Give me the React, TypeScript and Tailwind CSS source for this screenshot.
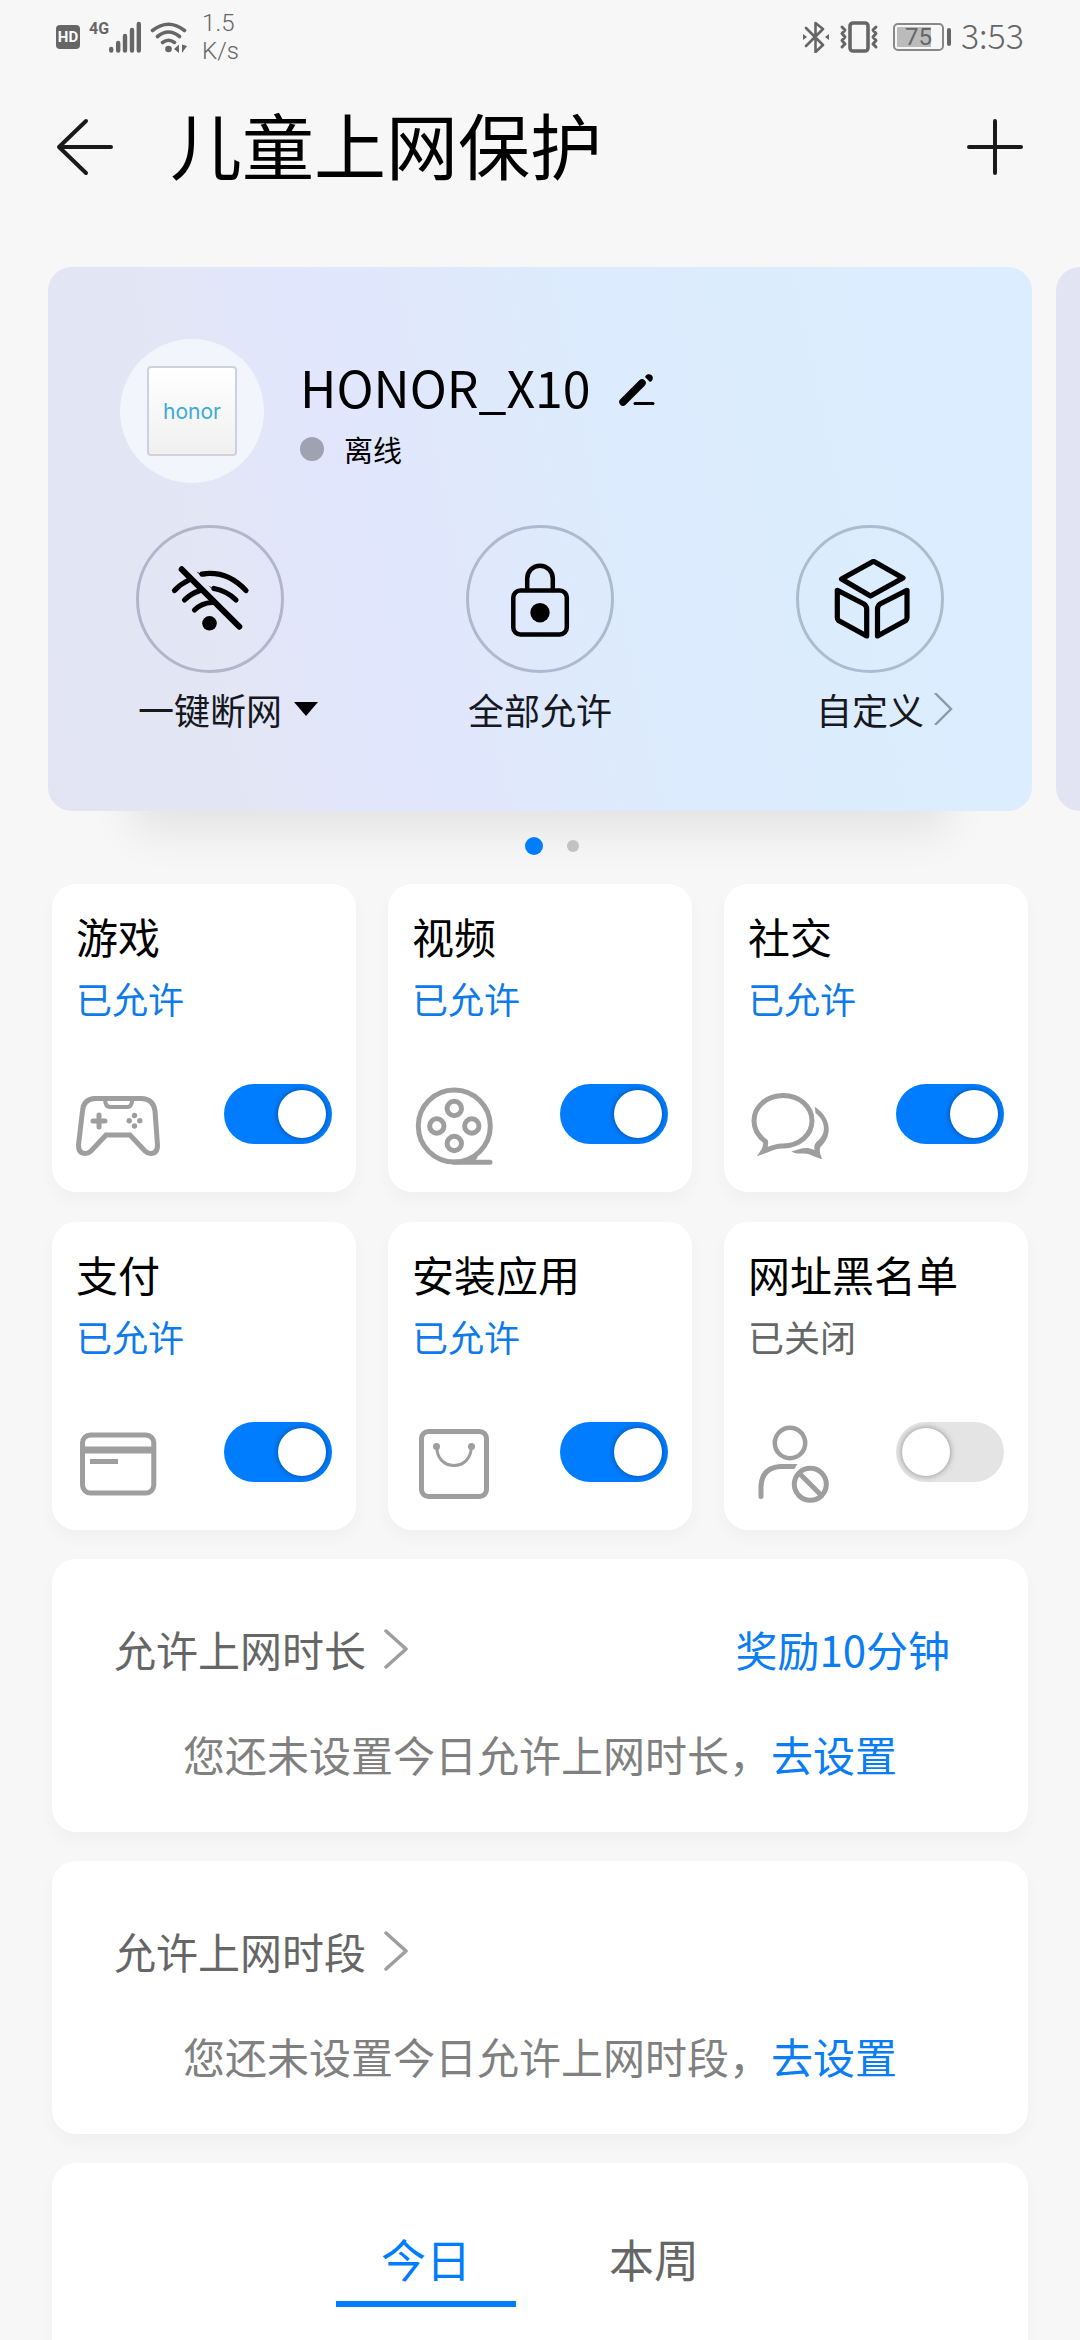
import { useState } from 'react';
import type { ReactNode } from 'react';
import { clsx } from 'clsx';

interface Rule {
  id: string;
  title: string;
  icon: ReactNode;
  enabled: boolean;
}

function SignalIcons() {
  return (
    <div className="flex items-center gap-[9px]">
      <span className="flex h-6 w-6 items-center justify-center rounded bg-[#666] font-[Roboto] text-[15px] leading-none font-bold text-white">
        HD
      </span>
      <div className="flex h-8 items-start">
        <span className="font-[Roboto] text-[16px] leading-[16px] font-bold text-[#666]">4G</span>
        <svg className="h-8 w-8" viewBox="0 0 32 32" stroke="#666" strokeWidth="4.4" strokeLinecap="round">
          <path d="M2.200 28v1.500M9.200 22v7.500M16 15v14.500M23 9v20.500M29.800 3v26.500" />
        </svg>
      </div>
      <svg className="h-8 w-[38px]" viewBox="0 0 38 32" fill="none" stroke="#666" strokeWidth="3.6" strokeLinecap="round">
        <path d="M2.500 9.500Q18.500-3 34.500 9.500M7.500 15.500Q18.500 6.500 29.500 15.500M12.500 21.500Q18.500 17 24.500 21.500" />
        <circle cx="18.500" cy="28" r="3.300" fill="#666" stroke="none" />
        <path d="M24 28l5-4.500V32zM37 25l-5 7v-8.500z" fill="#666" stroke="none" />
      </svg>
    </div>
  );
}

function StatusBar() {
  return (
    <div className="flex h-[74px] items-center justify-between px-14 font-[Roboto] text-[#666]">
      <div className="flex items-center gap-[14px]">
        <SignalIcons />
        <div className="text-[24px] leading-[28px] font-light">
          <div>1.5</div>
          <div>K/s</div>
        </div>
      </div>
      <div className="flex items-center gap-[10px]">
        <svg className="h-8 w-[26px]" viewBox="0 0 26 32" fill="none" stroke="#666" strokeWidth="2.600" strokeLinecap="round" strokeLinejoin="round">
          <path d="M3 7l17 17-7.500 7V2l7.500 6L3 25" />
          <path d="M0 13l4 3-4 3zM26 13l-4 3 4 3z" fill="#666" stroke="none" />
        </svg>
        <svg className="h-8 w-10" viewBox="0 0 40 32" fill="none" stroke="#666" strokeWidth="3" strokeLinecap="round" strokeLinejoin="round">
          <rect x="11" y="2" width="18" height="28" rx="3" strokeWidth="3.600" />
          <path d="M3 6l3 3-3 3.500 3 3.500-3 3.500 3 3.500-3 3M37 6l-3 3 3 3.500-3 3.500 3 3.500-3 3.500 3 3" />
        </svg>
        <div className="flex items-center gap-[3px] pl-1">
          <div className="flex h-7 w-[51px] items-center rounded-[5px] border-2 border-[#888] bg-[linear-gradient(90deg,#bbb_78%,transparent_78%)] bg-origin-content bg-clip-content p-[2px]">
            <span className="w-full text-center text-[24px] leading-none">75</span>
          </div>
          <div className="h-[18px] w-1 rounded-full bg-[#666]" />
        </div>
        <span className="pb-1 font-['Noto_Sans_CJK_SC',sans-serif] text-[34px] leading-none font-light">3:53</span>
      </div>
    </div>
  );
}

function Header() {
  return (
    <header className="flex h-[146px] items-center justify-between px-14">
      <div className="flex items-center gap-14">
        <button type="button" aria-label="返回">
          <svg className="h-[58px] w-[58px]" viewBox="0 0 58 58" fill="none" stroke="#1a1a1a" strokeWidth="4" strokeLinecap="round" strokeLinejoin="round">
            <path d="M55 29H3M30 3L3 29l27 26" />
          </svg>
        </button>
        <h1 className="pb-2 text-[72px] leading-[96px]">儿童上网保护</h1>
      </div>
      <button type="button" aria-label="添加">
        <svg className="h-[58px] w-[58px]" viewBox="0 0 58 58" stroke="#1a1a1a" strokeWidth="4" strokeLinecap="round">
          <path d="M3 29h52M29 3v52" />
        </svg>
      </button>
    </header>
  );
}

function QuickAction({ label, icon, mark }: { label: string; icon: ReactNode; mark?: ReactNode }) {
  return (
    <button type="button" className="flex w-[148px] flex-col items-center gap-3">
      <span className="flex h-[148px] w-[148px] items-center justify-center rounded-full border-3 border-[#1b2a4a]/25">
        <svg className="h-20 w-20" viewBox="0 0 80 80" fill="none" stroke="#000" strokeWidth="5.200" strokeLinecap="round" strokeLinejoin="round">
          {icon}
        </svg>
      </span>
      <span className="flex items-center text-[36px] leading-[48px] whitespace-nowrap text-[#16181d]">
        {label}
        {mark}
      </span>
    </button>
  );
}

function DeviceCard() {
  return (
    <section className="w-[calc(100%-48px)] shrink-0 rounded-3xl bg-[linear-gradient(78deg,#e2e4f3_0%,#e3e6f5_20%,#e1e6fd_32%,#e0e8fc_44%,#dcebfd_58%,#dbeeff_100%)] px-[72px] pt-[72px] pb-[78px] shadow-[0_106px_40px_-84px_rgba(0,0,0,0.08)]">
      <div className="flex items-center gap-9">
        <div className="flex h-36 w-36 items-center justify-center rounded-full bg-[#f3f5fc]">
          <div className="flex h-[90px] w-[90px] items-center justify-center rounded border-2 border-[#cfd0da] bg-linear-to-b from-white to-[#f0f0f0] font-[Inter] text-[21px] leading-none text-[#3cabd6]">
            honor
          </div>
        </div>
        <div className="flex flex-col gap-[15px]">
          <div className="flex items-center gap-7">
            <h2 className="text-[50px] leading-[60px]">HONOR_X10</h2>
            <button type="button" aria-label="重命名" className="pt-2">
              <svg className="h-8 w-9" viewBox="0 0 36 32" fill="none" stroke="#000" strokeLinecap="round">
                <path d="M4 28L23 9" strokeWidth="7.500" />
                <path d="M26 3l5 5a4 4 0 1 0-5-5z" fill="#000" stroke="none" />
                <path d="M16 29.500h18" strokeWidth="3" />
              </svg>
            </button>
          </div>
          <div className="flex items-center gap-5 text-[29px] leading-9">
            <span className="h-6 w-6 rounded-full bg-[#9fa2b1]" />
            离线
          </div>
        </div>
      </div>
      <div className="mt-[42px] flex justify-between px-4">
        <QuickAction
          label="一键断网"
          icon={
            <>
              <path d="M11.700 10.300L69.300 67.700" strokeWidth="6" />
              <path d="M4.500 31.500Q10.500 25 19 21M14.500 41Q21 34.500 29 32M24.500 51Q31.500 44 42 43.500" />
              <path d="M32 15Q57 11 76 31.500M44 29.500Q57 32 66 41" />
              <path d="M26.500 12.500L36 17.500H31.500zM38.500 26.500L47 32H44z" fill="#000" stroke="none" />
              <circle cx="39.500" cy="64.300" r="7.300" fill="#000" stroke="none" />
            </>
          }
          mark={
            <svg className="-mr-9 ml-3 h-4 w-6 shrink-0" viewBox="0 0 24 16">
              <path d="M0 1h24L12 15z" />
            </svg>
          }
        />
        <QuickAction
          label="全部允许"
          icon={
            <>
              <rect x="13.300" y="31.500" width="53.500" height="44" rx="7" strokeWidth="4.500" />
              <path d="M27.200 31V19.500a12.800 12.800 0 0 1 25.600 0V31" strokeWidth="4.500" />
              <circle cx="40" cy="53.700" r="9.700" fill="#000" stroke="none" />
            </>
          }
        />
        <QuickAction
          label="自定义"
          icon={
            <path d="M43.500 2.300L73 19 40.500 37 11.500 20zM7.300 31.300L34 45q2.700 2 2.700 5V77L8.500 61.500q-1.200-1-1.200-3zM77 31.300L50 45q-2.500 2-2.500 5V77l28.300-15.500q1.200-1 1.200-3z" />
          }
          mark={
            <svg className="-mr-[34px] ml-[10px] h-8 w-6 shrink-0" viewBox="0 0 24 32" fill="none" stroke="#8a98a8" strokeWidth="2.400">
              <path d="M1 0l16 16L1 32" />
            </svg>
          }
        />
      </div>
    </section>
  );
}

function RuleTile({ rule }: { rule: Rule }) {
  const [on, setOn] = useState(rule.enabled);

  return (
    <div className="rounded-3xl bg-white p-6 shadow-[0_8px_16px_rgba(0,0,0,0.03)]">
      <label htmlFor={rule.id} className="block text-[42px] leading-[56px]">
        {rule.title}
      </label>
      <p className={clsx('mt-[10px] text-[36px] leading-[48px]', on ? 'text-[#0f7bea]' : 'text-[#666]')}>
        {on ? '已允许' : '已关闭'}
      </p>
      <div className="mt-[62px] flex items-start justify-between">
        <svg className="h-[84px] w-[84px]" viewBox="0 0 84 84" fill="none" stroke="#9e9e9e" strokeWidth="5" strokeLinecap="round">
          {rule.icon}
        </svg>
        <input
          id={rule.id}
          type="checkbox"
          role="switch"
          checked={on}
          onChange={() => setOn(!on)}
          className="h-[60px] w-[108px] appearance-none rounded-full bg-[#e4e4e4] p-[6px] before:block before:h-12 before:w-12 before:rounded-full before:bg-white before:shadow-[0_0_6px_rgba(0,0,0,0.4)] checked:bg-[#007dff] checked:before:ml-12"
        />
      </div>
    </div>
  );
}

const rules: Rule[] = [
  {
    id: 'game',
    title: '游戏',
    enabled: true,
    icon: (
      <>
        <path d="M19 14.500H65.500Q77.500 15 79 27L81.500 61Q81.500 69.500 74.500 69.500Q71.500 69.500 69 67L54 51H30L15 67Q12.500 69.500 9.500 69.500Q2.500 69.500 2.500 61L6.500 27Q7.500 15 19 14.500Z" />
        <path d="M29 15.500Q29.500 23 34 23H51.500Q55.500 23 56.500 15.500" strokeWidth="4" />
        <path d="M17 37h12M23 31v12" />
        <g fill="#9e9e9e" stroke="none">
          <circle cx="58.500" cy="31.500" r="2.700" />
          <circle cx="58.500" cy="42" r="2.700" />
          <circle cx="53.200" cy="36.700" r="2.700" />
          <circle cx="63.800" cy="36.700" r="2.700" />
        </g>
      </>
    ),
  },
  {
    id: 'video',
    title: '视频',
    enabled: true,
    icon: (
      <>
        <circle cx="42.300" cy="42" r="36" />
        <circle cx="42.300" cy="24.500" r="7.200" />
        <circle cx="42.300" cy="59.500" r="7.200" />
        <circle cx="24.800" cy="42" r="7.200" />
        <circle cx="59.800" cy="42" r="7.200" />
        <path d="M42 78.300h36M58 77l5-4" />
      </>
    ),
  },
  {
    id: 'social',
    title: '社交',
    enabled: true,
    icon: (
      <>
        <path d="M17.500 57.500Q6 49 6 36.700C6 22.500 19 11.500 35.300 11.500S64 22.500 64 36.700S51 62 35.300 62C28 61 22 65 15 67.500Q18.500 62 17.500 57.500Z" />
        <path d="M66.800 22.700C84 34 84.500 52 72.500 63C71 66 72 71 74.500 75C67 74 63 69.500 56 69.500C51 69.500 47 70 43.500 67.500C50 66 55 63 62 64.500L66.500 66C66 62 66.500 60 68.500 58C79 50 78 37 67.500 29Z" fill="#9e9e9e" stroke="none" />
      </>
    ),
  },
  {
    id: 'pay',
    title: '支付',
    enabled: true,
    icon: (
      <>
        <rect x="6.500" y="13" width="71.300" height="58" rx="8" />
        <path d="M7 28h70" strokeWidth="7" strokeLinecap="butt" />
        <path d="M14 39.500h28" strokeLinecap="butt" />
      </>
    ),
  },
  {
    id: 'install',
    title: '安装应用',
    enabled: true,
    icon: (
      <>
        <rect x="9.500" y="9.500" width="65" height="65" rx="7" />
        <path d="M24.800 25C24.800 36 32 43.500 42 43.500S59.200 36 59.200 25" strokeWidth="3" />
        <circle cx="24.500" cy="24.500" r="3.500" fill="#9e9e9e" stroke="none" />
        <circle cx="59.500" cy="24.500" r="3.500" fill="#9e9e9e" stroke="none" />
      </>
    ),
  },
  {
    id: 'blocklist',
    title: '网址黑名单',
    enabled: false,
    icon: (
      <>
        <circle cx="42" cy="21" r="15.200" strokeWidth="4.500" />
        <path d="M13 74.500V64Q14 46 32 44.500H45" />
        <path d="M44 42h5.500l-4 5H44z" fill="#9e9e9e" stroke="none" />
        <circle cx="62.300" cy="62.300" r="16" />
        <path d="M51.500 51.500l22 22" />
      </>
    ),
  },
];

function LimitCard({ title, hint, action }: { title: string; hint: string; action?: string }) {
  return (
    <section className="rounded-3xl bg-white pt-[60px] pb-12 text-[42px] leading-[60px] shadow-[0_8px_16px_rgba(0,0,0,0.03)]">
      <div className="flex items-center justify-between pr-[78px] pl-[62px]">
        <button type="button" className="flex items-center gap-[18px] text-[#666]">
          {title}
          <svg className="h-10 w-6" viewBox="0 0 24 40" fill="none" stroke="#9e9e9e" strokeWidth="3.500" strokeLinecap="round" strokeLinejoin="round">
            <path d="M2 2l20 18L2 38" />
          </svg>
        </button>
        {action && (
          <button type="button" className="text-[#0a7df5]">
            {action}
          </button>
        )}
      </div>
      <p className="mt-[45px] text-center text-[#808080]">
        {hint}
        <a href="#" className="text-[#0a7df5]">
          去设置
        </a>
      </p>
    </section>
  );
}

function UsageTabs() {
  const [tab, setTab] = useState('今日');

  return (
    <section className="flex flex-1 items-start justify-center gap-12 rounded-t-3xl bg-white pt-[66px] pb-6 shadow-[0_8px_16px_rgba(0,0,0,0.03)]">
      {['今日', '本周'].map((name) => (
        <button
          key={name}
          type="button"
          onClick={() => setTab(name)}
          className={clsx(
            'w-[180px] border-b-6 pb-3 text-[45px] leading-[60px]',
            tab === name ? 'border-[#007dff] text-[#007dff]' : 'border-transparent text-[#666]'
          )}
        >
          {name}
        </button>
      ))}
    </section>
  );
}

export default function App() {
  return (
    <div className="flex min-h-screen flex-col overflow-x-clip bg-[#f7f7f7] font-['Noto_Sans_CJK_SC',sans-serif] text-black">
      <StatusBar />
      <Header />
      <div className="mt-[47px] flex gap-6 pl-12">
        <DeviceCard />
        <div className="w-[calc(100%-48px)] shrink-0 rounded-3xl bg-[#e2e4f3]" />
      </div>
      <div className="mt-[26px] flex items-center justify-center gap-6 pl-6">
        <span className="h-[18px] w-[18px] rounded-full bg-[#007dff]" />
        <span className="h-3 w-3 rounded-full bg-[#c2c2c2]" />
      </div>
      <main className="mt-[29px] flex flex-1 flex-col gap-[29px] px-[52px]">
        <div className="grid grid-cols-3 gap-x-8 gap-y-[30px]">
          {rules.map((rule) => (
            <RuleTile key={rule.id} rule={rule} />
          ))}
        </div>
        <LimitCard title="允许上网时长" hint="您还未设置今日允许上网时长，" action="奖励10分钟" />
        <LimitCard title="允许上网时段" hint="您还未设置今日允许上网时段，" />
        <UsageTabs />
      </main>
    </div>
  );
}
